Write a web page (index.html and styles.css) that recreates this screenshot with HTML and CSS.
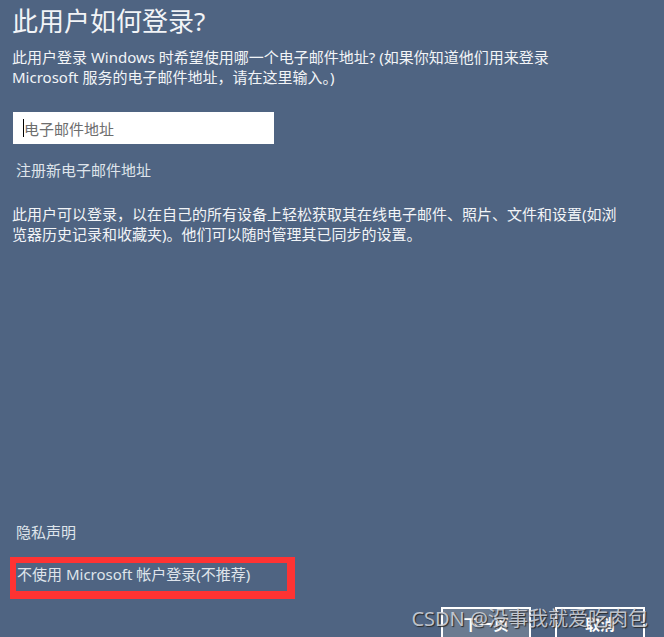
FILE: index.html
```html
<!DOCTYPE html>
<html lang="zh-CN">
<head>
    <meta charset="UTF-8">
    <meta name="viewport" content="width=device-width, initial-scale=1.0">
    <title>此用户如何登录?</title>
    <link rel="stylesheet" href="styles.css">
</head>
<body>
<div class="page">
    <div class="main">
        <h1 class="title">此用户如何登录?</h1>
        <p class="intro">此用户登录 Windows 时希望使用哪一个电子邮件地址? (如果你知道他们用来登录 Microsoft 服务的电子邮件地址，请在这里输入。)</p>
        <div class="email-box">
            <span class="caret"></span>
            <span class="placeholder">电子邮件地址</span>
        </div>
        <a class="link signup">注册新电子邮件地址</a>
        <p class="info">此用户可以登录，以在自己的所有设备上轻松获取其在线电子邮件、照片、文件和设置(如浏览器历史记录和收藏夹)。他们可以随时管理其已同步的设置。</p>
    </div>
    <div class="footer">
        <a class="link privacy">隐私声明</a>
        <div class="mark-box">
            <a class="link no-account">不使用 Microsoft 帐户登录(不推荐)</a>
        </div>
        <div class="button-row">
            <button class="btn btn-next">下一页</button>
            <button class="btn btn-cancel">取消</button>
        </div>
    </div>
    <div class="watermark">CSDN @没事我就爱吃肉包</div>
</div>
</body>
</html>
```

FILE: styles.css
```css
body {
    margin: 0;
    padding: 0;
    background-color: #4f6482;
    color: #f2f4f7;
    font-family: "Segoe UI", "Noto Sans", "Noto Sans CJK SC", sans-serif;
    overflow: hidden;
}
.page {
    position: relative;
    height: 637px;
    padding-left: 12px;
    display: flex;
    flex-direction: column;
    box-sizing: border-box;
    overflow: hidden;
}
.title {
    margin: 6px 0 0;
    font-size: 26px;
    font-weight: normal;
    line-height: 31px;
}
.intro {
    margin: 10px 0 0;
    width: 560px;
    font-size: 15px;
    line-height: 20px;
}
.email-box {
    margin: 25px 0 0 1px;
    width: 261px;
    height: 32px;
    background: #fff;
    display: flex;
    align-items: center;
    padding-left: 10px;
    box-sizing: border-box;
}
.caret {
    width: 1px;
    height: 18px;
    background: #000;
}
.placeholder {
    color: #6d6d6d;
    font-size: 15px;
}
.link {
    display: block;
    color: #dfe4eb;
    font-size: 15px;
    line-height: 20px;
}
.signup {
    margin: 16px 0 0 4px;
}
.info {
    margin: 24px 0 0;
    width: 612px;
    font-size: 15px;
    line-height: 20px;
}
.footer {
    margin-top: auto;
    display: flex;
    flex-direction: column;
}
.privacy {
    margin-left: 4px;
}
.mark-box {
    margin: 15px 0 0 -2px;
    width: 285px;
    height: 42px;
    border: 6px solid #ff3333;
    border-right-width: 8px;
    border-bottom-width: 8px;
    box-sizing: border-box;
    padding-left: 1px;
}
.no-account {
    margin-top: 1px;
}
.button-row {
    margin-top: 8px;
    height: 30px;
    display: flex;
    justify-content: flex-end;
    gap: 24px;
    padding-right: 19px;
}
.btn {
    width: 90px;
    height: 36px;
    flex-shrink: 0;
    border: 2px solid #fff;
    color: #fff;
    font-family: "Noto Sans CJK SC", sans-serif;
    font-size: 15px;
    font-weight: bold;
    padding: 0 0 4px;
}
.btn-next {
    background: #6b7b90;
}
.btn-cancel {
    background: #4f6482;
}
.watermark {
    position: absolute;
    right: 16px;
    bottom: 6px;
    font-family: "Noto Sans", "Noto Sans CJK SC", sans-serif;
    font-size: 20px;
    line-height: 24px;
    color: rgba(215, 218, 224, 0.85);
    text-shadow: 1px 1px 1px #2a2a2a;
}
```
